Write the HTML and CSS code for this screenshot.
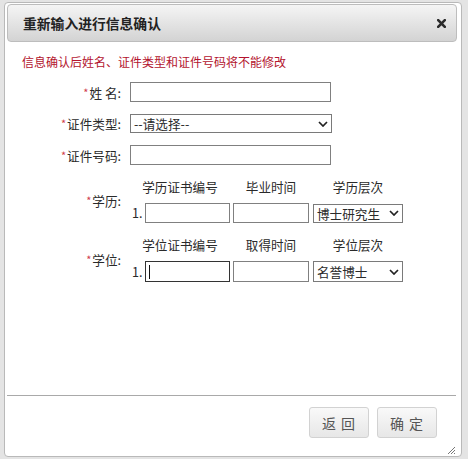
FILE: index.html
```html
<!DOCTYPE html>
<html lang="zh-CN">
<head>
<meta charset="utf-8">
<title>重新输入进行信息确认</title>
<link rel="stylesheet" href="styles.css">
</head>
<body>
<div class="dialog">
  <div class="header">
    <span class="title">重新输入进行信息确认</span>
    <svg class="close" width="9" height="9" viewBox="0 0 9 9"><path d="M1.2 1.2L7.8 7.8M7.8 1.2L1.2 7.8" stroke="#2b2b2b" stroke-width="2.6" stroke-linecap="square"/></svg>
  </div>
  <div class="body">
    <p class="notice">信息确认后姓名、证件类型和证件号码将不能修改</p>
    <div class="row r1">
      <label class="lbl"><i>*</i>姓&nbsp;名:</label>
      <div class="input wide"></div>
    </div>
    <div class="row r2">
      <label class="lbl"><i>*</i>证件类型:</label>
      <div class="select wide-sel"><span>--请选择--</span><svg width="10" height="6" viewBox="0 0 10 6"><path d="M1 1L5 5L9 1" fill="none" stroke="#222" stroke-width="1.7"/></svg></div>
    </div>
    <div class="row r3">
      <label class="lbl"><i>*</i>证件号码:</label>
      <div class="input wide"></div>
    </div>
    <div class="row block b1">
      <label class="lbl"><i>*</i>学历:</label>
      <div class="grid">
        <span class="hd first">学历证书编号</span>
        <span class="hd w2">毕业时间</span>
        <span class="hd w3">学历层次</span>
        <span class="num">1.</span>
        <div class="input w1"></div>
        <div class="input w2"></div>
        <div class="select w3"><span>博士研究生</span><svg width="10" height="6" viewBox="0 0 10 6"><path d="M1 1L5 5L9 1" fill="none" stroke="#222" stroke-width="1.7"/></svg></div>
      </div>
    </div>
    <div class="row block b2">
      <label class="lbl"><i>*</i>学位:</label>
      <div class="grid">
        <span class="hd first">学位证书编号</span>
        <span class="hd w2">取得时间</span>
        <span class="hd w3">学位层次</span>
        <span class="num">1.</span>
        <div class="input w1 focused"><span class="caret"></span></div>
        <div class="input w2"></div>
        <div class="select w3"><span>名誉博士</span><svg width="10" height="6" viewBox="0 0 10 6"><path d="M1 1L5 5L9 1" fill="none" stroke="#222" stroke-width="1.7"/></svg></div>
      </div>
    </div>
  </div>
  <div class="footer">
    <button class="btn">返&nbsp;回</button>
    <button class="btn">确&nbsp;定</button>
    <svg class="grip" width="10" height="10" viewBox="0 0 10 10"><path d="M9 2L2 9M9 5L5 9M9 8L8 9" stroke="#777" stroke-width="1"/></svg>
  </div>
</div>
</body>
</html>
```
FILE: styles.css
```css
* { box-sizing: border-box; }
html, body { margin: 0; }
body {
  width: 468px;
  height: 459px;
  overflow: hidden;
  background: #e4e4e4;
  padding: 2px 6px 0 4px;
  font-family: "Noto Sans CJK SC", "Noto Sans", sans-serif;
  color: #2a2a2a;
}
.dialog {
  width: 458px;
  height: 455px;
  background: #fff;
  border: 1px solid #b9b9b9;
  border-radius: 4px;
  padding: 1px 4px 0 2px;
  display: flex;
  flex-direction: column;
}
.header {
  height: 38px;
  border: 1px solid #bdbdbd;
  border-radius: 4px;
  background: linear-gradient(#f5f5f5, #d3d3d3);
  display: flex;
  align-items: center;
  justify-content: space-between;
  padding: 0 10px 0 15px;
  flex: none;
}
.title {
  font-size: 13.8px;
  font-weight: bold;
  color: #222;
  line-height: 18px;
}
.body {
  flex: 1;
}
.notice {
  margin: 10px 0 0 15px;
  font-size: 12px;
  line-height: 20px;
  color: #b3142e;
}
.row {
  display: grid;
  grid-template-columns: 114px auto;
  column-gap: 9px;
  align-items: center;
}
.r1 { margin-top: 10px; }
.r2 { margin-top: 12px; }
.r3 { margin-top: 12px; }
.b1 { margin-top: 13px; }
.b2 { margin-top: 13px; }
.lbl {
  text-align: right;
  font-size: 12.6px;
  line-height: 18px;
  color: #2a2a2a;
}
.lbl i {
  font-style: normal;
  color: #d03c4a;
  font-size: 11px;
  vertical-align: 1px;
  margin-right: 1px;
}
.input {
  height: 20px;
  border: 1px solid #808080;
  background: #fff;
}
.wide { width: 201px; }
.select {
  height: 19px;
  border: 1px solid #7a7a7a;
  background: #fff;
  display: flex;
  align-items: center;
  justify-content: space-between;
  padding: 0 3px 0 3px;
  font-size: 12.6px;
  line-height: 17px;
  color: #2a2a2a;
}
.wide-sel { width: 202px; }
.grid {
  display: grid;
  grid-template-columns: 15px 88px 80px 90px;
  row-gap: 7px;
  align-items: center;
}
.hd {
  font-size: 12.6px;
  line-height: 18px;
  text-align: center;
  color: #2a2a2a;
}
.hd.first {
  grid-column: 1 / 3;
  width: 100px;
}
.num {
  font-size: 12.6px;
  line-height: 18px;
  padding-left: 2px;
}
.w1 { width: 85px; }
.w2 { width: 76px; }
.w3 { width: 90px; }
.b2 .input, .b2 .select { height: 21px; }
.focused {
  border-color: #333;
  display: flex;
  align-items: center;
  padding-left: 3px;
}
.caret {
  width: 1px;
  height: 14px;
  background: #111;
}
.footer {
  flex: none;
  height: 61px;
  border-top: 1px solid #a9a9a9;
  margin-right: 1px;
  display: flex;
  justify-content: flex-end;
  align-items: flex-start;
  gap: 8px;
  padding: 11px 19px 0 0;
  position: relative;
}
.btn {
  width: 60px;
  height: 31px;
  border: 1px solid #d2d2d2;
  border-radius: 3px;
  background: linear-gradient(#f9f9f9, #e7e7e7);
  font-family: "Noto Sans CJK SC", sans-serif;
  font-size: 14px;
  color: #555;
  padding: 0;
  letter-spacing: 1px;
}
.grip {
  position: absolute;
  right: 0;
  bottom: 1px;
}
```
